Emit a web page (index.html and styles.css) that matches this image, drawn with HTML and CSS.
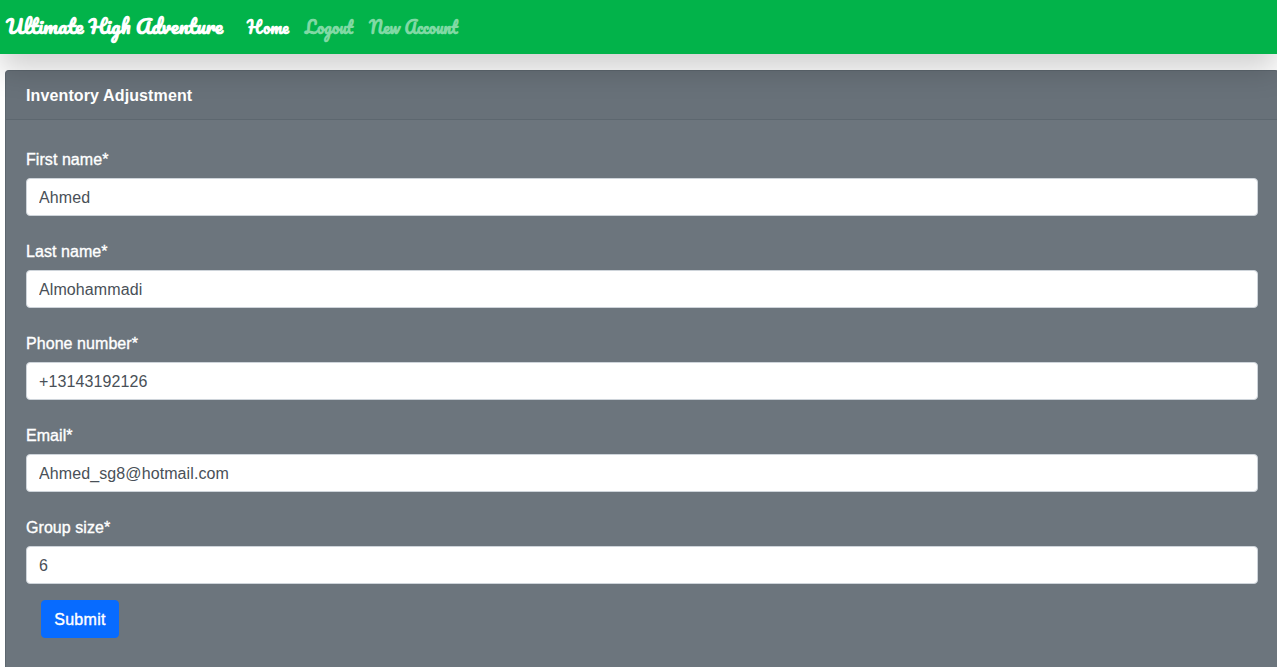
FILE: index.html
```html
<!DOCTYPE html>
<html lang="en">
<head>
<meta charset="utf-8">
<title>Ultimate High Adventure</title>
<link rel="stylesheet" href="styles.css">
</head>
<body>
<nav class="navbar">
  <a class="brand">Ultimate High Adventure</a>
  <a class="nav-link home">Home</a>
  <a class="nav-link logout">Logout</a>
  <a class="nav-link account">New Account</a>
</nav>
<main class="card">
  <header class="card-header">Inventory Adjustment</header>
  <form class="card-body">
    <label class="field">First name*<input class="control" type="text" value="Ahmed"></label>
    <label class="field">Last name*<input class="control" type="text" value="Almohammadi"></label>
    <label class="field">Phone number*<input class="control" type="text" value="+13143192126"></label>
    <label class="field">Email*<input class="control" type="text" value="Ahmed_sg8@hotmail.com"></label>
    <label class="field">Group size*<input class="control" type="text" value="6"></label>
    <button class="submit" type="button">Submit</button>
  </form>
</main>
</body>
</html>
```

FILE: styles.css
```css
* { box-sizing: border-box; }
body {
  margin: 0;
  height: 667px;
  overflow: hidden;
  background: #fff;
  color: #fff;
  font: 16px/24px "Liberation Sans", Arial, sans-serif;
}
.navbar {
  position: relative;
  z-index: 1;
  display: flex;
  align-items: center;
  height: 54px;
  padding: 0 0 2px 6px;
  background: #02b34a;
  box-shadow: 0 16px 30px rgba(0, 0, 0, .18);
  font-family: Pacifico, "Liberation Serif", cursive;
  font-weight: bold;
  white-space: nowrap;
}
.brand {
  width: 241px;
  font-size: 20px;
}
.nav-link {
  padding-top: 1px;
  font-size: 16px;
  color: #80d9a4;
}
.home { width: 58px; color: #fff; }
.logout { width: 64px; }
.card {
  width: 1274px;
  height: 597px;
  margin: 16px 0 0 5px;
  border: 1px solid #5d676f;
  border-bottom: 0;
  border-radius: 4px 4px 0 0;
  background: #6c757d;
}
.card-header {
  height: 49px;
  padding: 13px 20px 11px;
  border-bottom: 1px solid #5d676f;
  border-radius: 3px 3px 0 0;
  background: rgba(0, 0, 0, .03);
  font-weight: bold;
  letter-spacing: .12px;
}
.card-body { padding: 28px 20px 0; }
.field {
  display: block;
  margin-bottom: 24px;
  letter-spacing: .06px;
  -webkit-text-stroke: .35px #fff;
}
.control {
  display: block;
  width: 1232px;
  height: 38px;
  margin-top: 6px;
  padding: 7px 12px 5px;
  border: 1px solid #ced4da;
  border-radius: 4px;
  background: #fff;
  color: #495057;
  font: inherit;
  letter-spacing: .1px;
  -webkit-text-stroke: 0;
}
.submit {
  display: block;
  width: 78px;
  height: 38px;
  margin: -8px 0 0 15px;
  padding: 7px 11px 5px;
  border: 1px solid #076bff;
  border-radius: 4px;
  background: #076bff;
  color: #fff;
  font: inherit;
  letter-spacing: .3px;
  -webkit-text-stroke: .4px #fff;
}
```
